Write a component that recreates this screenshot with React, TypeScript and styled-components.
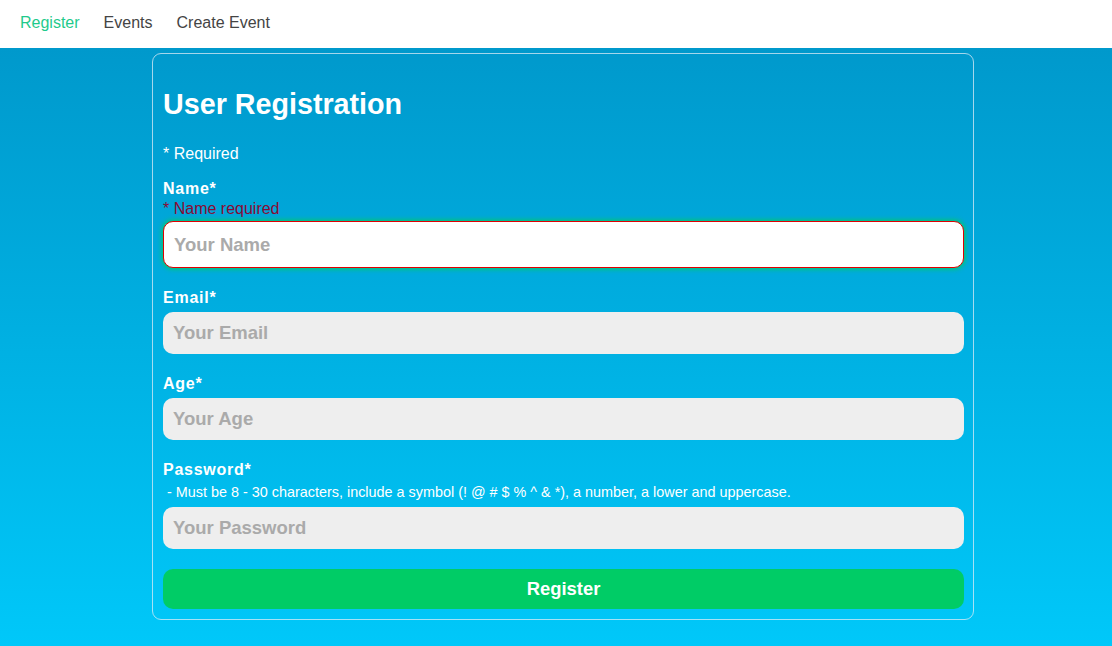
import React from "react";
import styled, { createGlobalStyle } from "styled-components";

const GlobalStyle = createGlobalStyle`
  html, body {
    margin: 0;
    padding: 0;
    font-family: "Liberation Sans", Arial, Helvetica, sans-serif;
    background: #00c6f7;
  }
  * { box-sizing: border-box; }
`;

const Nav = styled.nav`
  height: 48px;
  background: #ffffff;
  display: flex;
  align-items: center;
  gap: 24px;
  padding: 0 0 2px 20px;
`;

const NavLink = styled.a<{ $active?: boolean }>`
  font-size: 16px;
  line-height: 18px;
  color: ${(p) => (p.$active ? "#1fca8c" : "#444444")};
  text-decoration: none;
  cursor: pointer;
`;

const Main = styled.main`
  min-height: calc(100vh - 48px);
  background: linear-gradient(180deg, #0099cc 0%, #00c8f9 100%);
  padding-top: 5px;
  overflow: hidden;
`;

const Card = styled.form`
  width: 822px;
  margin: 0 auto 0 152px;
  border: 1px solid rgba(220, 235, 245, 0.75);
  border-radius: 9px;
  padding: 10px 9px 10px 10px;
  color: #ffffff;
`;

const Title = styled.h2`
  margin: 24px 0 24px;
  font-size: 28.7px;
  line-height: 33px;
  font-weight: 700;
`;

const Note = styled.p`
  margin: 0 0 17px;
  font-size: 16px;
  line-height: 18px;
`;

const Group = styled.div`
  display: flex;
  flex-direction: column;
  margin-bottom: 21px;
`;

const Label = styled.label`
  font-size: 16px;
  line-height: 18px;
  font-weight: 700;
  letter-spacing: 0.75px;
`;

const ErrorText = styled.span`
  margin-top: 2px;
  font-size: 16px;
  line-height: 18px;
  color: #8a0a33;
`;

const Hint = styled.span`
  font-size: 14.4px;
  line-height: 16px;
  margin-top: 5px;
  padding-left: 4px;
`;

const Input = styled.input<{ $invalid?: boolean; $gap?: number }>`
  margin-top: ${(p) => p.$gap ?? 5}px;
  height: ${(p) => (p.$invalid ? 47 : 42)}px;
  width: 100%;
  border-radius: 10px;
  border: ${(p) => (p.$invalid ? "1px solid #e00000" : "none")};
  background: ${(p) => (p.$invalid ? "#ffffff" : "#eeeeee")};
  box-shadow: ${(p) => (p.$invalid ? "0 0 5px 1px #00cc66" : "none")};
  padding: 0 10px;
  font-family: "Liberation Sans", Arial, sans-serif;
  font-size: 18.5px;
  font-weight: 700;
  color: #333;
  outline: none;
  &::placeholder {
    color: #aaaaaa;
    opacity: 1;
  }
`;

const Button = styled.button`
  margin-top: -1px;
  width: 100%;
  height: 40px;
  border: none;
  border-radius: 10px;
  background: #00cc66;
  color: #ffffff;
  font-family: "Liberation Sans", Arial, sans-serif;
  font-size: 18.4px;
  font-weight: 700;
  cursor: pointer;
  display: block;
`;

export default function App() {
  return (
    <>
      <GlobalStyle />
      <Nav>
        <NavLink $active>Register</NavLink>
        <NavLink>Events</NavLink>
        <NavLink>Create Event</NavLink>
      </Nav>
      <Main>
        <Card onSubmit={(e) => e.preventDefault()}>
          <Title>User Registration</Title>
          <Note>* Required</Note>
          <Group>
            <Label>Name*</Label>
            <ErrorText>* Name required</ErrorText>
            <Input $invalid $gap={3} placeholder="Your Name" />
          </Group>
          <Group>
            <Label>Email*</Label>
            <Input placeholder="Your Email" />
          </Group>
          <Group>
            <Label>Age*</Label>
            <Input placeholder="Your Age" />
          </Group>
          <Group>
            <Label>Password*</Label>
            <Hint>
              - Must be 8 - 30 characters, include a symbol (! @ # $ % ^ &amp; *), a number, a lower and uppercase.
            </Hint>
            <Input $gap={7} type="password" placeholder="Your Password" />
          </Group>
          <Button type="submit">Register</Button>
        </Card>
      </Main>
    </>
  );
}
